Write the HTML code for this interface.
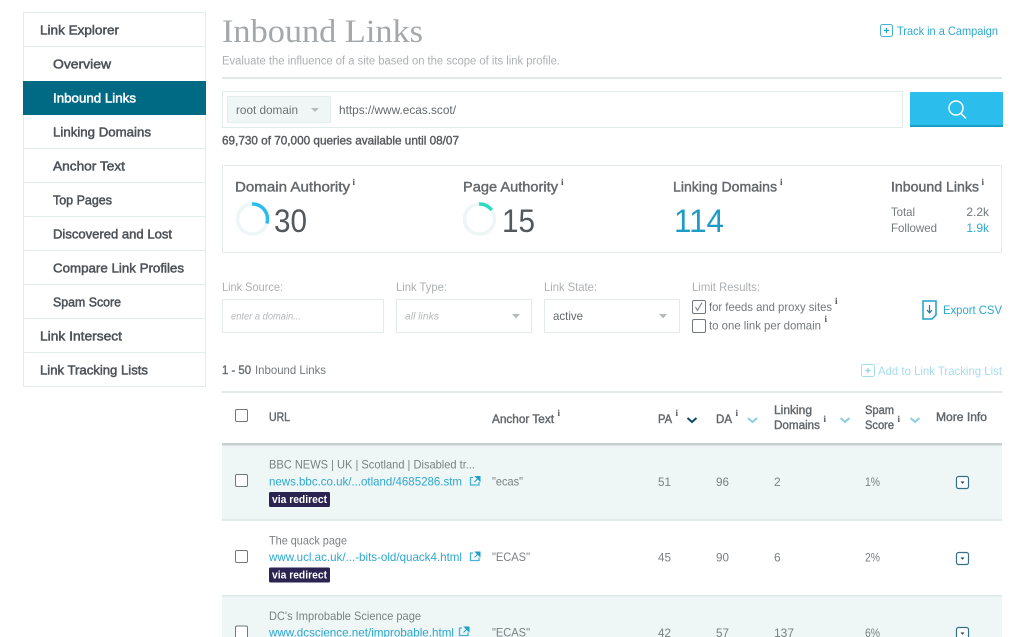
<!DOCTYPE html>
<html lang="en">
<head>
<meta charset="utf-8">
<title>Inbound Links</title>
<style>
html,body{margin:0;padding:0;background:#fff;width:1024px;height:637px;overflow:hidden}
svg{display:block;filter:blur(.3px)}
text{font-family:"Liberation Sans",sans-serif;font-size:12px;fill:#74797c;white-space:pre}
.nav{font-size:13px;fill:#4d5258;stroke:#4d5258;stroke-width:.5px}
.lab{font-size:14px;fill:#62676b;stroke:#62676b;stroke-width:.4px}
.big{font-size:32px;fill:#53585c}
.fl{font-size:12px;fill:#adb0b2}
.ph{font-size:10.5px;font-style:italic;fill:#b5b8ba}
.lnk{fill:#2ea8cf}
.th{font-size:11.5px;fill:#62676b;stroke:#62676b;stroke-width:.4px}
.i{font-family:"Liberation Serif",serif;font-size:9px;font-weight:bold;fill:#4f5458}
.td{font-size:12px;fill:#7b8083}
.bd{font-size:11px;font-weight:bold;fill:#fff}
.cb{fill:#fff;stroke:#71777b;stroke-width:1}
</style>
</head>
<body>
<svg width="1024" height="637" viewBox="0 0 1024 637" xmlns="http://www.w3.org/2000/svg">
<!-- sidebar -->
<rect x="23.5" y="12.5" width="182" height="374" fill="#fff" stroke="#e4ebeb"/>
<g stroke="#e4ebeb">
<path d="M23 46.5H206M23 148.5H206M23 182.5H206M23 216.5H206M23 250.5H206M23 284.5H206M23 318.5H206M23 352.5H206"/>
</g>
<rect x="23" y="81" width="183" height="34" fill="#006a85"/>
<text class="nav" x="40" y="34.5" textLength="79" lengthAdjust="spacingAndGlyphs">Link Explorer</text>
<text class="nav" x="53" y="68.5" textLength="58" lengthAdjust="spacingAndGlyphs">Overview</text>
<text class="nav" x="53" y="102.5" textLength="83" lengthAdjust="spacingAndGlyphs" style="fill:#fff;stroke:#fff">Inbound Links</text>
<text class="nav" x="53" y="136.5" textLength="98" lengthAdjust="spacingAndGlyphs">Linking Domains</text>
<text class="nav" x="53" y="170.5" textLength="72" lengthAdjust="spacingAndGlyphs">Anchor Text</text>
<text class="nav" x="53" y="204.5" textLength="59" lengthAdjust="spacingAndGlyphs">Top Pages</text>
<text class="nav" x="53" y="238.5" textLength="119" lengthAdjust="spacingAndGlyphs">Discovered and Lost</text>
<text class="nav" x="53" y="272.5" textLength="131" lengthAdjust="spacingAndGlyphs">Compare Link Profiles</text>
<text class="nav" x="53" y="306.5" textLength="68" lengthAdjust="spacingAndGlyphs">Spam Score</text>
<text class="nav" x="40" y="340.5" textLength="82" lengthAdjust="spacingAndGlyphs">Link Intersect</text>
<text class="nav" x="40" y="374.5" textLength="108" lengthAdjust="spacingAndGlyphs">Link Tracking Lists</text>

<!-- heading -->
<text x="222" y="42" textLength="201" lengthAdjust="spacingAndGlyphs" style="font-family:'Liberation Serif',serif;font-size:33px;fill:#a4a8aa">Inbound Links</text>
<text x="222" y="64.5" textLength="338" lengthAdjust="spacingAndGlyphs" style="font-size:11.5px;fill:#adb0b2">Evaluate the influence of a site based on the scope of its link profile.</text>
<rect x="222" y="77" width="780" height="2" fill="#e2e7e7"/>
<rect x="880.5" y="24.5" width="12" height="12" rx="2" fill="none" stroke="#45b2d6"/>
<path d="M886.5 28v5M884 30.5h5" stroke="#1fa0c8" stroke-width="1.2"/>
<text class="lnk" x="897" y="35" textLength="101" lengthAdjust="spacingAndGlyphs">Track in a Campaign</text>

<!-- search -->
<rect x="222.5" y="91.5" width="680" height="36" fill="#fff" stroke="#e1ebeb"/>
<rect x="227.5" y="96.5" width="103" height="26" rx="1" fill="#f0f6f6" stroke="#e4eeee"/>
<text x="236" y="114" textLength="62" lengthAdjust="spacingAndGlyphs" style="fill:#6c7175">root domain</text>
<path d="M311 108h8l-4 4z" fill="#b6bcbe"/>
<text x="339" y="114" textLength="117" lengthAdjust="spacingAndGlyphs" style="fill:#63686c">https://www.ecas.scot/</text>
<text x="222" y="144.5" textLength="237" lengthAdjust="spacingAndGlyphs" style="fill:#565a5e;stroke:#565a5e;stroke-width:.4px">69,730 of 70,000 queries available until 08/07</text>
<rect x="910" y="92" width="93" height="35" rx="1" fill="#2bbdec"/>
<rect x="910" y="125" width="93" height="2" fill="#1a9ec8"/>
<circle cx="956" cy="108" r="7" fill="none" stroke="#fff" stroke-width="1.4"/>
<path d="M960.8 113.2L966 118.5" stroke="#fff" stroke-width="1.5"/>

<!-- stats -->
<rect x="222.5" y="165.5" width="779" height="87" fill="#fff" stroke="#e4eaea"/>
<text class="lab" x="235" y="191.5" textLength="115" lengthAdjust="spacingAndGlyphs">Domain Authority</text>
<text class="i" x="352.5" y="185">i</text>
<text class="lab" x="463" y="191.5" textLength="95" lengthAdjust="spacingAndGlyphs">Page Authority</text>
<text class="i" x="561" y="185">i</text>
<text class="lab" x="673" y="191.5" textLength="104" lengthAdjust="spacingAndGlyphs">Linking Domains</text>
<text class="i" x="780" y="185">i</text>
<text class="lab" x="891" y="191.5" textLength="88" lengthAdjust="spacingAndGlyphs">Inbound Links</text>
<text class="i" x="981.5" y="185">i</text>
<circle cx="252.5" cy="219" r="15" fill="none" stroke="#edf5f6" stroke-width="3.5"/>
<circle cx="252.5" cy="219" r="15" fill="none" stroke="#2bbdec" stroke-width="3.5" pathLength="100" stroke-dasharray="30 70" transform="rotate(-90 252.5 219)"/>
<text class="big" x="274" y="232" textLength="33" lengthAdjust="spacingAndGlyphs">30</text>
<circle cx="479.5" cy="219" r="15" fill="none" stroke="#edf5f6" stroke-width="3.5"/>
<circle cx="479.5" cy="219" r="15" fill="none" stroke="#2cdcc0" stroke-width="3.5" pathLength="100" stroke-dasharray="15 85" transform="rotate(-90 479.5 219)"/>
<text class="big" x="502" y="232" textLength="33" lengthAdjust="spacingAndGlyphs">15</text>
<text class="big" x="674" y="232" textLength="50" lengthAdjust="spacingAndGlyphs" style="fill:#1e9cc5">114</text>
<text x="891" y="216" textLength="24" lengthAdjust="spacingAndGlyphs">Total</text>
<text x="989" y="216" text-anchor="end">2.2k</text>
<text x="891" y="232" textLength="46" lengthAdjust="spacingAndGlyphs">Followed</text>
<text class="lnk" x="989" y="232" text-anchor="end">1.9k</text>

<!-- filters -->
<text class="fl" x="222" y="291" textLength="61" lengthAdjust="spacingAndGlyphs">Link Source:</text>
<text class="fl" x="396" y="291" textLength="51" lengthAdjust="spacingAndGlyphs">Link Type:</text>
<text class="fl" x="544" y="291" textLength="53" lengthAdjust="spacingAndGlyphs">Link State:</text>
<text class="fl" x="692" y="291" textLength="68" lengthAdjust="spacingAndGlyphs">Limit Results:</text>
<rect x="222.5" y="299.5" width="161" height="33" rx="1" fill="#fff" stroke="#e4eaea"/>
<rect x="396.5" y="299.5" width="135" height="33" rx="1" fill="#fff" stroke="#e4eaea"/>
<rect x="544.5" y="299.5" width="135" height="33" rx="1" fill="#fff" stroke="#e4eaea"/>
<text class="ph" x="231" y="319.5" textLength="70" lengthAdjust="spacingAndGlyphs">enter a domain...</text>
<text class="ph" x="405" y="319.5" textLength="34" lengthAdjust="spacingAndGlyphs">all links</text>
<text x="553" y="320" textLength="30" lengthAdjust="spacingAndGlyphs" style="fill:#63686c">active</text>
<path d="M512 314h8l-4 4.500z" fill="#b6bcbe"/>
<path d="M659 314h8l-4 4.500z" fill="#b6bcbe"/>
<rect class="cb" x="692.500" y="300.500" width="13" height="13" rx="1.500"/>
<path d="M695.500 307l2 3.500 4.500-8" fill="none" stroke="#71777b" stroke-width="1"/>
<text x="709" y="311" textLength="123" lengthAdjust="spacingAndGlyphs">for feeds and proxy sites</text>
<text class="i" x="835" y="304">i</text>
<rect class="cb" x="692.500" y="319.500" width="13" height="13" rx="1.500"/>
<text x="709" y="329.500" textLength="112" lengthAdjust="spacingAndGlyphs">to one link per domain</text>
<text class="i" x="824.500" y="322">i</text>
<path d="M923 301h13v14l-4 4h-9z" fill="none" stroke="#1fa0c8" stroke-width="1.500"/>
<path d="M929.500 305v7M927 310l2.500 3 2.500-3" fill="none" stroke="#1d7f9e" stroke-width="1.200"/>
<text class="lnk" x="943" y="314" textLength="59" lengthAdjust="spacingAndGlyphs">Export CSV</text>

<!-- results head -->
<text x="222" y="374" textLength="29" lengthAdjust="spacingAndGlyphs" style="fill:#696e72;stroke:#696e72;stroke-width:.4px">1 - 50</text>
<text x="255" y="374" textLength="71" lengthAdjust="spacingAndGlyphs">Inbound Links</text>
<rect x="861.500" y="364.500" width="13" height="12" rx="2" fill="none" stroke="#a5dcec"/>
<path d="M868 368v5M865.500 370.500h5" stroke="#8fd2e6" stroke-width="1.200"/>
<text x="878" y="375" textLength="124" lengthAdjust="spacingAndGlyphs" style="fill:#a5dcec">Add to Link Tracking List</text>

<!-- table -->
<rect x="222" y="391" width="780" height="2" fill="#e2e8e8"/>
<rect x="222" y="443" width="780" height="2.500" fill="#c6cecf"/>
<rect x="222" y="445.500" width="780" height="73.500" fill="#eef6f6"/>
<rect x="222" y="519" width="780" height="2" fill="#e1ebeb"/>
<rect x="222" y="595" width="780" height="1.500" fill="#dfe8e8"/>
<rect x="222" y="596.500" width="780" height="41" fill="#eef6f6"/>

<rect class="cb" x="235.500" y="409.500" width="12" height="12" rx="1.500"/>
<text class="th" x="269" y="421" textLength="21" lengthAdjust="spacingAndGlyphs">URL</text>
<text class="th" x="492" y="423" textLength="62" lengthAdjust="spacingAndGlyphs">Anchor Text</text>
<text class="i" x="557.500" y="416">i</text>
<text class="th" x="658" y="423" textLength="14" lengthAdjust="spacingAndGlyphs">PA</text>
<text class="i" x="675.500" y="416">i</text>
<path d="M687.500 418l4.500 4 4.500-4" fill="none" stroke="#0c4a66" stroke-width="2"/>
<text class="th" x="716" y="423" textLength="16" lengthAdjust="spacingAndGlyphs">DA</text>
<text class="i" x="735.500" y="416">i</text>
<path d="M748 418l4.500 4 4.500-4" fill="none" stroke="#8ccfe3" stroke-width="2"/>
<text class="th" x="774" y="414" textLength="38" lengthAdjust="spacingAndGlyphs">Linking</text>
<text class="th" x="774" y="429" textLength="46" lengthAdjust="spacingAndGlyphs">Domains</text>
<text class="i" x="823.500" y="422">i</text>
<path d="M840.500 418l4.500 4 4.500-4" fill="none" stroke="#8ccfe3" stroke-width="2"/>
<text class="th" x="865" y="414" textLength="29" lengthAdjust="spacingAndGlyphs">Spam</text>
<text class="th" x="865" y="429" textLength="29" lengthAdjust="spacingAndGlyphs">Score</text>
<text class="i" x="897.500" y="422">i</text>
<path d="M910.500 418l4.500 4 4.500-4" fill="none" stroke="#8ccfe3" stroke-width="2"/>
<text class="th" x="936" y="421" textLength="51" lengthAdjust="spacingAndGlyphs">More Info</text>

<!-- row 1 -->
<rect class="cb" x="235.500" y="474.500" width="12" height="12" rx="1.500"/>
<text class="td" x="269" y="468.500" textLength="206" lengthAdjust="spacingAndGlyphs">BBC NEWS | UK | Scotland | Disabled tr...</text>
<text class="lnk" x="269" y="485.500" textLength="193" lengthAdjust="spacingAndGlyphs">news.bbc.co.uk/...otland/4685286.stm</text>
<path d="M473 477.500h-2.500v7.500h8.500v-3" fill="none" stroke="#45b2d6" stroke-width="1.300"/>
<path d="M474.500 482l4-4M475.500 476.500h4.500v4.500z" fill="#1fa0c8" stroke="#1fa0c8"/>
<text class="td" x="492" y="485.500" textLength="31" lengthAdjust="spacingAndGlyphs">"ecas"</text>
<rect x="269" y="492" width="61" height="15" rx="1.500" fill="#2b2350"/>
<text class="bd" x="272" y="503" textLength="55" lengthAdjust="spacingAndGlyphs">via redirect</text>
<text class="td" x="658" y="486" textLength="13" lengthAdjust="spacingAndGlyphs">51</text>
<text class="td" x="716" y="486" textLength="13" lengthAdjust="spacingAndGlyphs">96</text>
<text class="td" x="774" y="486">2</text>
<text class="td" x="865" y="486" textLength="15" lengthAdjust="spacingAndGlyphs">1%</text>
<rect x="956.500" y="476.500" width="12" height="12" rx="2" fill="#fff" stroke="#34708c" stroke-width="1.200"/>
<path d="M960.500 481.500h4l-2 2.200z" fill="#1a3e55"/>

<!-- row 2 -->
<rect class="cb" x="235.500" y="550.500" width="12" height="12" rx="1.500"/>
<text class="td" x="269" y="544.500" textLength="78" lengthAdjust="spacingAndGlyphs">The quack page</text>
<text class="lnk" x="269" y="561" textLength="193" lengthAdjust="spacingAndGlyphs">www.ucl.ac.uk/...-bits-old/quack4.html</text>
<path d="M473 553h-2.500v7.500h8.500v-3" fill="none" stroke="#45b2d6" stroke-width="1.300"/>
<path d="M474.500 557.500l4-4M475.500 552h4.500v4.500z" fill="#1fa0c8" stroke="#1fa0c8"/>
<text class="td" x="492" y="561" textLength="38" lengthAdjust="spacingAndGlyphs">"ECAS"</text>
<rect x="269" y="567.500" width="61" height="15" rx="1.500" fill="#2b2350"/>
<text class="bd" x="272" y="578.500" textLength="55" lengthAdjust="spacingAndGlyphs">via redirect</text>
<text class="td" x="658" y="561.500" textLength="13" lengthAdjust="spacingAndGlyphs">45</text>
<text class="td" x="716" y="561.500" textLength="13" lengthAdjust="spacingAndGlyphs">90</text>
<text class="td" x="774" y="561.500">6</text>
<text class="td" x="865" y="561.500" textLength="15" lengthAdjust="spacingAndGlyphs">2%</text>
<rect x="956.500" y="552.500" width="12" height="12" rx="2" fill="#fff" stroke="#34708c" stroke-width="1.200"/>
<path d="M960.500 557.500h4l-2 2.200z" fill="#1a3e55"/>

<!-- row 3 -->
<rect class="cb" x="235.500" y="626" width="12" height="12" rx="1.500"/>
<text class="td" x="269" y="620" textLength="152" lengthAdjust="spacingAndGlyphs">DC's Improbable Science page</text>
<text class="lnk" x="269" y="636.500" textLength="185" lengthAdjust="spacingAndGlyphs">www.dcscience.net/improbable.html</text>
<path d="M462 628h-2.500v7.500h8.500v-3" fill="none" stroke="#45b2d6" stroke-width="1.300"/>
<path d="M463.500 632.500l4-4M464.500 627h4.500v4.500z" fill="#1fa0c8" stroke="#1fa0c8"/>
<text class="td" x="492" y="636.500" textLength="38" lengthAdjust="spacingAndGlyphs">"ECAS"</text>
<text class="td" x="658" y="637" textLength="13" lengthAdjust="spacingAndGlyphs">42</text>
<text class="td" x="716" y="637" textLength="13" lengthAdjust="spacingAndGlyphs">57</text>
<text class="td" x="774" y="637" textLength="20" lengthAdjust="spacingAndGlyphs">137</text>
<text class="td" x="865" y="637" textLength="15" lengthAdjust="spacingAndGlyphs">6%</text>
<rect x="956.500" y="627.500" width="12" height="12" rx="2" fill="#fff" stroke="#34708c" stroke-width="1.200"/>
<path d="M960.500 632.500h4l-2 2.200z" fill="#1a3e55"/>
</svg>
</body>
</html>
